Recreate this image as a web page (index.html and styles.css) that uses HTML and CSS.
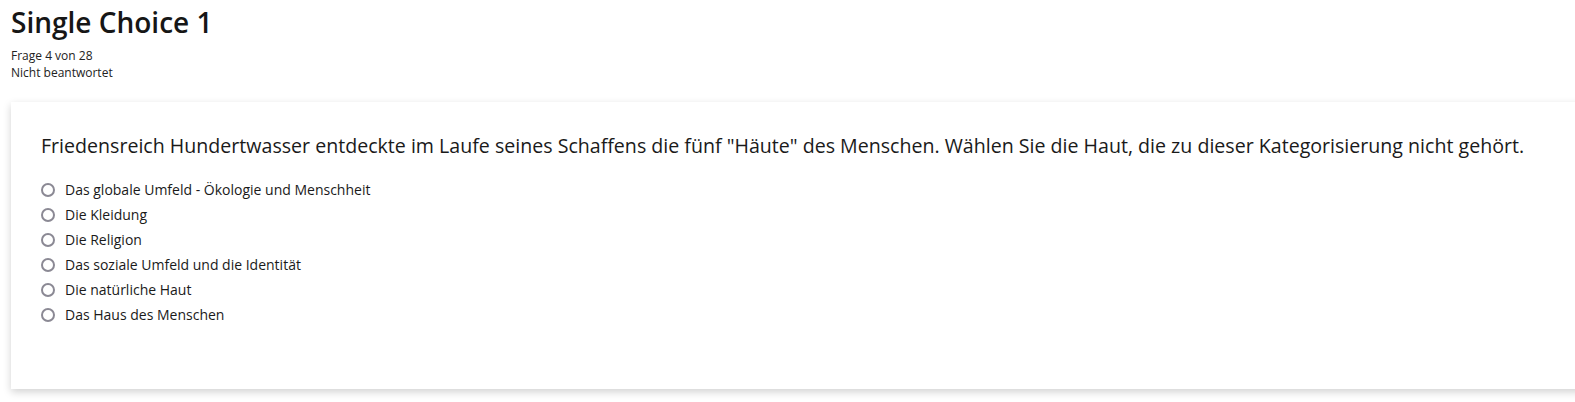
FILE: index.html
```html
<!DOCTYPE html>
<html lang="de">
<head>
<meta charset="utf-8">
<title>Single Choice 1</title>
<link rel="stylesheet" href="styles.css">
</head>
<body>
<div class="page">
  <header class="head">
    <h1 class="title">Single Choice 1</h1>
    <div class="meta">
      <div>Frage 4 von 28</div>
      <div>Nicht beantwortet</div>
    </div>
  </header>
  <section class="card">
    <p class="question">Friedensreich Hundertwasser entdeckte im Laufe seines Schaffens die fünf "Häute" des Menschen. Wählen Sie die Haut, die zu dieser Kategorisierung nicht gehört.</p>
    <ul class="options">
      <li class="option"><span class="radio"></span><span>Das globale Umfeld - Ökologie und Menschheit</span></li>
      <li class="option"><span class="radio"></span><span>Die Kleidung</span></li>
      <li class="option"><span class="radio"></span><span>Die Religion</span></li>
      <li class="option"><span class="radio"></span><span>Das soziale Umfeld und die Identität</span></li>
      <li class="option"><span class="radio"></span><span>Die natürliche Haut</span></li>
      <li class="option"><span class="radio"></span><span>Das Haus des Menschen</span></li>
    </ul>
  </section>
</div>
</body>
</html>
```
FILE: styles.css
```css
html {
  overflow: hidden;
  background: #ffffff;
}
body {
  margin: 0;
  padding: 0;
  font-family: "Open Sans", "Noto Sans", sans-serif;
  color: #1a1a1a;
}
.page {
  padding: 0 0 20px 11px;
}
.head {
  padding-top: 2px;
}
.title {
  margin: 0;
  font-size: 28px;
  font-weight: 600;
  line-height: 40px;
  color: #161616;
}
.meta {
  margin-top: 5px;
  font-size: 12px;
  line-height: 17px;
  color: #222;
}
.card {
  margin-top: 21px;
  margin-right: -40px;
  background: #fff;
  box-shadow: 0 3px 8px rgba(0, 0, 0, 0.18);
  height: 287px;
  padding: 29px 30px 0;
  box-sizing: border-box;
}
.question {
  margin: 0;
  font-size: 19.6px;
  line-height: 30px;
  color: #1a1a1a;
  white-space: nowrap;
}
.options {
  list-style: none;
  margin: 16px 0 0;
  padding: 0;
}
.option {
  display: flex;
  align-items: center;
  gap: 10px;
  height: 25px;
  font-size: 14px;
  color: #1a1a1a;
}
.radio {
  width: 14px;
  height: 14px;
  box-sizing: border-box;
  border: 2px solid #8b8994;
  border-radius: 50%;
  flex: none;
}
```
